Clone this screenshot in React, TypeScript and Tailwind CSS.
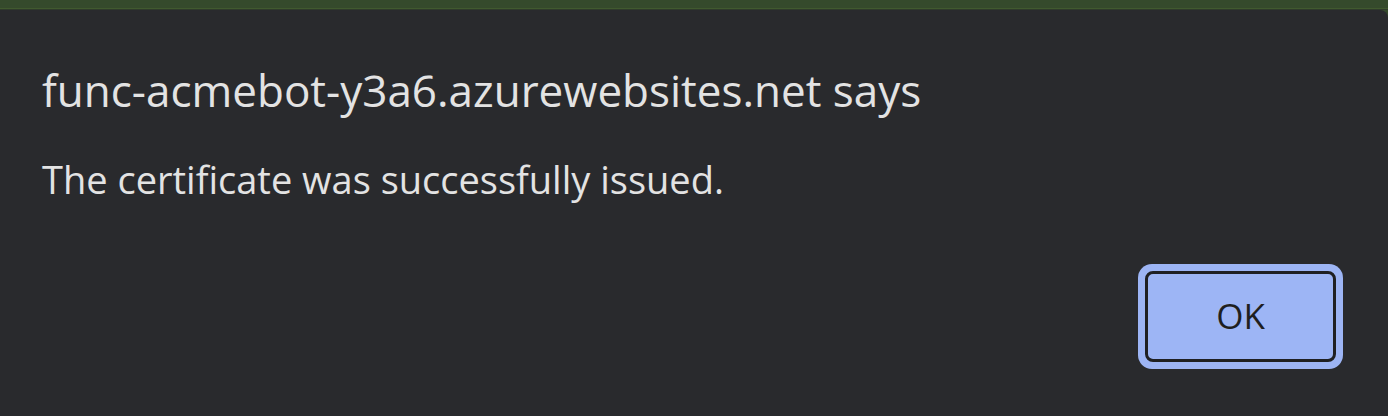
import React from 'react';

export default function App() {
  return (
    <div className="w-[1388px] h-[416px] flex flex-col bg-[#354a2c] overflow-hidden" style={{ fontFamily: '"Open Sans", "Noto Sans", sans-serif' }}>
      {/* page behind the dialog */}
      <div className="h-[8px] shrink-0 bg-[#354a2c]" />
      <div className="h-[1px] shrink-0 bg-[#41592f]" />
      <div className="h-[1px] shrink-0 bg-[#2f3b2b]" />

      {/* dialog */}
      <div className="flex-1 flex flex-col bg-[#292a2d] rounded-tr-[8px] pl-[42px] pr-[45px]">
        <h1 className="mt-[58px] text-[44px] leading-[44px] text-[#e3e3e3] font-normal whitespace-nowrap">
          func-acmebot-y3a6.azurewebsites.net says
        </h1>
        <p className="mt-[48px] text-[38px] leading-[38px] text-[#e3e3e3] whitespace-nowrap">
          The certificate was successfully issued.
        </p>
        <div className="flex justify-end mt-[66px]">
          <button className="w-[205px] h-[105px] p-[7px] rounded-[14px] bg-[#9db5f5]">
            <span className="flex items-center justify-center w-full h-full rounded-[8px] border-[3px] border-[#1f2023] text-[35px] text-[#1f1f1f]">
              OK
            </span>
          </button>
        </div>
      </div>
    </div>
  );
}
